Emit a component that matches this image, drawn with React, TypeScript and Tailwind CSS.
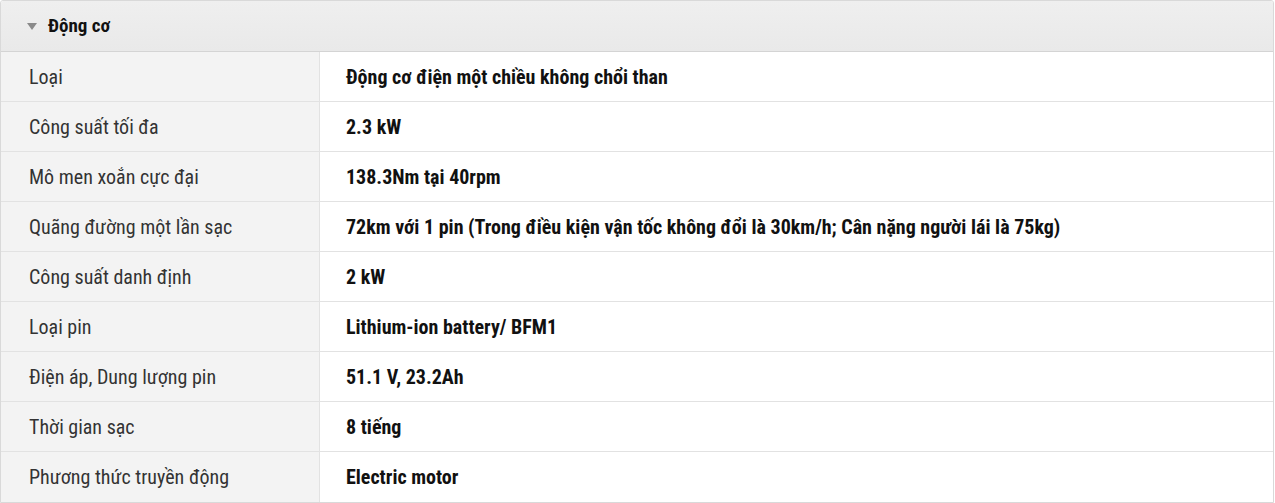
import React from 'react';

const specs: [string, string][] = [
  ['Loại', 'Động cơ điện một chiều không chổi than'],
  ['Công suất tối đa', '2.3 kW'],
  ['Mô men xoắn cực đại', '138.3Nm tại 40rpm'],
  ['Quãng đường một lần sạc', '72km với 1 pin (Trong điều kiện vận tốc không đổi là 30km/h; Cân nặng người lái là 75kg)'],
  ['Công suất danh định', '2 kW'],
  ['Loại pin', 'Lithium-ion battery/ BFM1'],
  ['Điện áp, Dung lượng pin', '51.1 V, 23.2Ah'],
  ['Thời gian sạc', '8 tiếng'],
  ['Phương thức truyền động', 'Electric motor'],
];

const App: React.FC = () => {
  return (
    <div className="w-[1275px] h-[503px] bg-white font-['Roboto',sans-serif] font-stretch-condensed text-[20px] text-[#222]">
      <div className="w-[1274px] border border-[#d9d9d9] rounded-t-[3px] overflow-hidden">
        <div className="h-[51px] flex items-center bg-gradient-to-b from-[#efefef] to-[#e9e9e9] border-b border-[#d4d4d4] pl-[26px]">
          <span className="w-0 h-0 border-l-[5px] border-r-[5px] border-t-[7px] border-l-transparent border-r-transparent border-t-[#8a8a8a] mr-[11px]" />
          <span className="font-bold text-[19px] text-[#111]">Động cơ</span>
        </div>
        {specs.map(([label, value], i) => (
          <div
            key={label}
            className={`flex h-[50px] ${i < specs.length - 1 ? 'border-b border-[#e2e2e2]' : ''}`}
          >
            <div className="w-[319px] shrink-0 bg-[#f3f3f3] border-r border-[#e2e2e2] flex items-center pl-[28px] text-[#333]">
              {label}
            </div>
            <div className="flex-1 flex items-center pl-[26px] font-bold text-[#111]">{value}</div>
          </div>
        ))}
      </div>
    </div>
  );
};

export default App;
